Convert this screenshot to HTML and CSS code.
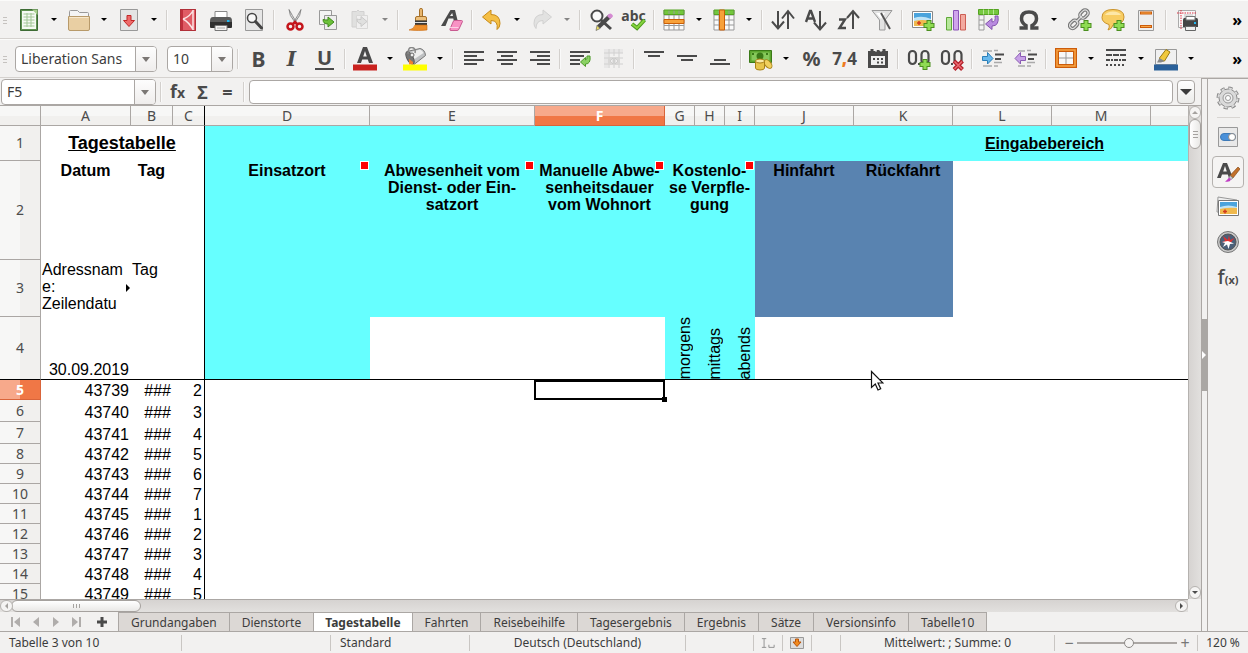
FILE: index.html
```html
<!DOCTYPE html>
<html lang="de">
<head>
  <meta charset="UTF-8" />
  <meta name="viewport" content="width=device-width, initial-scale=1.0"/>
  <title>Tagestabelle</title>
  <link rel="stylesheet" href="styles.css">
</head>
<body>
  <!-- Standard toolbar -->
  <div class="toolbar">
    <span class="grip"></span>
    <button class="tool split" title="Neu"><svg class="icon" viewBox="0 0 24 24"><path d="M3.500 1.500h17v21h-17z" fill="#5f9150" stroke="#3d6b34"/><path d="M5 3h14v18H5z" fill="#f6faf3"/><path d="M15 1.500h5.500V7z" fill="#a9d08f"/><path d="M6.500 6h11M6.500 9h11M6.500 12h11M6.500 15h11M6.500 18h11M10 5v14M14 5v14" stroke="#a3c796" fill="none"/></svg><i class="caret"></i></button>
    <button class="tool split" title="Öffnen"><svg class="icon" viewBox="0 0 24 24"><path d="M2.500 20V3.500q0-1 1-1h7l2 2h8q1 0 1 1V20z" fill="#f4f4f4" stroke="#999"/><path d="M1.500 8.500h21V21q0 1.500-1.500 1.500H3Q1.500 22.500 1.500 21z" fill="#e9cfa3" stroke="#b89a6a"/><path d="M2.500 9.500h19" stroke="#f7e8cd"/></svg><i class="caret"></i></button>
    <button class="tool split" title="Speichern"><svg class="icon" viewBox="0 0 24 24"><path d="M3.500 1.500h17v21h-17z" fill="#e4e4e4" stroke="#999"/><path d="M10 7.500h4v5h3.500L12 18.500 6.500 12.500H10z" fill="#ee6a6a" stroke="#c02626"/></svg><i class="caret"></i></button>
    <span class="sep"></span>
    <button class="tool" title="Als PDF exportieren"><svg class="icon" viewBox="0 0 24 24"><path d="M4 1h16v22H4z" fill="#e05c65"/><path d="M4 1h3v22H4z" fill="#c02f3c"/><path d="M17 1v22M7 11Q14 9 18 1M7 11q6 3 11 12" stroke="#fbe3e4" stroke-width="1.500" fill="none"/><path d="M4.500 1.500h15v21h-15z" fill="none" stroke="#b03038"/></svg></button>
    <button class="tool" title="Drucken"><svg class="icon" viewBox="0 0 24 24"><path d="M6 3.500h12V10H6z" fill="#fff" stroke="#888"/><path d="M4 9h16q3 0 3 4v5H1v-5q0-4 3-4z" fill="#5a5a5a"/><path d="M1 14h22v5q0 1-1 1H2q-1 0-1-1z" fill="#2f2f2f"/><path d="M6 17.500h12v5H6z" fill="#f3f3f3" stroke="#777"/><path d="M8 20h8" stroke="#aaa"/><path d="M18 12h2.500v2H18z" fill="#22b7f0"/></svg></button>
    <button class="tool" title="Druckvorschau"><svg class="icon" viewBox="0 0 24 24"><path d="M3.500 1.500h17v21h-17z" fill="#e6e6e6" stroke="#999"/><circle cx="10" cy="10" r="4.500" fill="#f8f8f8" stroke="#444" stroke-width="1.500"/><path d="M13.500 13.500l6 6.500" stroke="#444" stroke-width="3" stroke-linecap="round"/></svg></button>
    <span class="sep"></span>
    <button class="tool" title="Ausschneiden"><svg class="icon" viewBox="0 0 24 24"><path d="M6 1.500q0 6 5.500 12l2 1Q9 7 6 1.500zM18 1.500q0 6-5.500 12l-2 1Q15 7 18 1.500z" fill="#ddd" stroke="#777" stroke-width=".8"/><g fill="none" stroke="#c4161c" stroke-width="2.500"><circle cx="7.500" cy="18.500" r="3"/><circle cx="16.500" cy="18.500" r="3"/><path d="M10 16l2-2 2 2"/></g></svg></button>
    <button class="tool" title="Kopieren"><svg class="icon" viewBox="0 0 24 24"><path d="M3.500 2.500h12v14h-12z" fill="#f4f4f4" stroke="#999"/><path d="M8.500 7.500h12v14h-12z" fill="#eee" stroke="#999"/><path d="M7 11.500q0 4.500 5 4.500v3l6-5-6-5v3q-3 0-5-.5z" fill="#6cc13a" stroke="#3f8a1b"/></svg></button>
    <button class="tool split" title="Einfügen"><svg class="icon faded" viewBox="0 0 24 24"><path d="M4 3.500h4.500q1.500-3 3 0H16V19H4z" fill="#ccc" stroke="#aaa"/><path d="M8.500 7.500h11v13h-11z" fill="#eee" stroke="#bbb"/><path d="M9 11q0 4.500 4 4.500v3l6-5-6-5v3q-3 0-4-.5z" fill="#ccc" stroke="#999"/></svg><i class="caret faded"></i></button>
    <span class="sep"></span>
    <button class="tool" title="Format übertragen"><svg class="icon" viewBox="0 0 24 24"><path d="M12.500 1.500q0-1 1.500-1t1.500 1V9h-3z" fill="#e8b66e" stroke="#a5702a"/><path d="M8.500 10q0-1.500 1.500-1.500h8q1.500 0 1.500 1.500v3h-11z" fill="#edc07c" stroke="#a5702a"/><path d="M8 12.500h12V17H8z" fill="#3a3a3a"/><path d="M8 14.500h12" stroke="#ddd"/><path d="M8 17h12v5q-8 1-18 0 5-1 6-5z" fill="#ee8f2c" stroke="#c86a10" stroke-width=".6"/></svg></button>
    <button class="tool" title="Direkte Formatierung löschen"><svg class="icon" viewBox="0 0 24 24"><path d="M1 18L10.500 2H15l3 12h-4l-.7-3.500H8.500L5.500 18zM10 8h3l-.8-3z" fill="#4a4a4a" fill-rule="evenodd"/><path d="M14.500 12.500h7q1 0 1 1L19 21q-.5 1.500-2 1.500h-6q-1.500 0-1-1.500l3-7q.5-1.500 1.500-1.500z" fill="#f892c4" stroke="#c85a90"/><path d="M10 19.500h8.500" stroke="#fcd0e5"/></svg></button>
    <span class="sep"></span>
    <button class="tool split" title="Rückgängig"><svg class="icon" viewBox="0 0 24 24"><path d="M2.500 9L11 2v4.500q9 0 9 9 0 4-3 6 1.500-9-6-9V16z" fill="#f5bf45" stroke="#c78a18"/></svg><i class="caret"></i></button>
    <button class="tool split" title="Wiederholen"><svg class="icon faded" viewBox="0 0 24 24"><path d="M21.500 9L13 2v4.500q-9 0-9 9 0 3 2 5 0-8 7-8V16z" fill="#d0d0d0" stroke="#aaa"/></svg><i class="caret faded"></i></button>
    <span class="sep"></span>
    <button class="tool" title="Suchen und Ersetzen"><svg class="icon" viewBox="0 0 24 24"><circle cx="8" cy="8" r="5.500" fill="#fafafa" stroke="#4a4a4a" stroke-width="2"/><path d="M12 12l10 9" stroke="#4a4a4a" stroke-width="3"/><path d="M19.500 6.500l3 3L11 20.500 8 17.500z" fill="#4a4a4a"/><path d="M18 8l2-2q1.500-1 3 .5t.5 2.500L21 11z" fill="#d58ad2"/><path d="M8 17.500l3 3-4 2z" fill="#f0e060" stroke="#555" stroke-width=".6"/></svg></button>
    <button class="tool" title="Rechtschreibung"><span class="glyph abc">abc</span><svg class="icon overlay" viewBox="0 0 24 24"><path d="M10 16l5 4 7.500-8" fill="none" stroke="#4b9a1c" stroke-width="4"/><path d="M10 16l5 4 7.500-8" fill="none" stroke="#86d33f" stroke-width="2"/></svg></button>
    <span class="sep"></span>
    <button class="tool split" title="Zeile"><svg class="icon" viewBox="0 0 24 24"><path d="M2 2h20v5H2z" fill="#73c83c"/><path d="M2 7h20v15H2z" fill="#fafafa"/><path d="M2 7h20M2 17.500h20M2 22h20M2 2v20M7 2v20M12 2v20M17 2v20M22 2v20" stroke="#999" fill="none"/><path d="M2 11.500h20v4H2z" fill="#f7a13a" stroke="#c95f08"/><path d="M2 2h20v4.500H2z" fill="none" stroke="#55a322"/></svg><i class="caret"></i></button>
    <button class="tool split" title="Spalte"><svg class="icon" viewBox="0 0 24 24"><path d="M2 2h20v5H2z" fill="#73c83c"/><path d="M2 7h20v15H2z" fill="#fafafa"/><path d="M2 7h20M2 12h20M2 17h20M2 22h20M2 2v20M7 2v20M17 2v20M22 2v20" stroke="#999" fill="none"/><path d="M2 2h20v4.500H2z" fill="none" stroke="#55a322"/><path d="M7.500 2h5v20h-5z" fill="#f7a13a" stroke="#c95f08"/></svg><i class="caret"></i></button>
    <span class="sep"></span>
    <button class="tool" title="Sortieren"><svg class="icon" viewBox="0 0 24 24"><path d="M7 3v17M1 13.500l6 7 6-7M17 21V4M11 10.500L17 3l6 7.500" fill="none" stroke="#4a4a4a" stroke-width="2"/></svg></button>
    <button class="tool" title="Aufsteigend sortieren"><svg class="icon" viewBox="0 0 24 24"><path d="M2 14L6 3h1l4 11M3.500 10.500h6" fill="none" stroke="#4a4a4a" stroke-width="2.400"/><path d="M16 3v18M10 14.500l6 7 6-7" fill="none" stroke="#4a4a4a" stroke-width="2"/></svg></button>
    <button class="tool" title="Absteigend sortieren"><svg class="icon" viewBox="0 0 24 24"><path d="M2 11.500h6L2.500 20H9" fill="none" stroke="#4a4a4a" stroke-width="2.400"/><path d="M16 21V3M10 10l6-7 6 7" fill="none" stroke="#4a4a4a" stroke-width="2"/></svg></button>
    <button class="tool" title="AutoFilter"><svg class="icon" viewBox="0 0 24 24"><path d="M2 2.500h20L15 12v10H9.500V12z" fill="#e2e2e2" stroke="#999"/><path d="M6 5h9l-4 6z" fill="#fff"/><path d="M11 5l9 16" stroke="#555" stroke-width="2"/></svg></button>
    <span class="sep"></span>
    <button class="tool" title="Bild einfügen"><svg class="icon" viewBox="0 0 24 24"><path d="M1.500 3.500h20v16h-20z" fill="#fff" stroke="#888"/><path d="M3 5h17v13H3z" fill="#4aa3dc"/><path d="M3 10q8-3 17 1v7H3z" fill="#bfe3f5"/><path d="M3 13q8-2 17 0v5H3z" fill="#f0b94d"/><path d="M6 15h4M8 13v4" stroke="#d23a1c" stroke-width="1.500"/><path class="plus-out" d="M18 12v11M12.500 17.500h11"/><path class="plus-in" d="M18 13v9M13.500 17.500h9"/></svg></button>
    <button class="tool" title="Diagramm einfügen"><svg class="icon" viewBox="0 0 24 24"><path d="M2.500 9.500h5V22h-5z" fill="#b6e79a" stroke="#5fa838"/><path d="M9.500 2.500h5V22h-5z" fill="#cfa5ec" stroke="#8b54b8"/><path d="M16.500 6.500h5V22h-5z" fill="#f3aaa0" stroke="#cc5f55"/></svg></button>
    <button class="tool" title="Pivot-Tabelle einfügen"><svg class="icon" viewBox="0 0 24 24"><path d="M2 7h5v15H2z" fill="#f4f4f4" stroke="#999"/><path d="M2 12h5M2 17h5" stroke="#999"/><path d="M1.500 1.500h20v5h-20z" fill="#76c840" stroke="#55a322"/><path d="M6.500 1.500v5M11.500 1.500v5M16.500 1.500v5" stroke="#b7e595"/><path d="M21 8q1.500 10-6 10v3.500L8.500 16 15 10.500V14q4 0 3-6z" fill="#b98be0" stroke="#8456ad"/></svg></button>
    <span class="sep"></span>
    <button class="tool split" title="Sonderzeichen"><svg class="icon" viewBox="0 0 24 24"><path d="M2.500 20H9v-2.500Q4.500 15 4.500 10.500 4.500 4 12 4t7.500 6.500q0 4.500-4.500 7V20h6.500" fill="none" stroke="#4a4a4a" stroke-width="3.500"/></svg><i class="caret"></i></button>
    <button class="tool" title="Hyperlink"><svg class="icon" viewBox="0 0 24 24"><g fill="none" stroke="#777" stroke-width="3.500"><rect x="13" y="1.500" width="6" height="9" rx="3" transform="rotate(45 16 6)"/><rect x="3" y="12" width="6" height="9" rx="3" transform="rotate(45 6 16)"/><path d="M8 14l6-6"/></g><g fill="none" stroke="#ddd" stroke-width="1.200"><rect x="13" y="1.500" width="6" height="9" rx="3" transform="rotate(45 16 6)"/><rect x="3" y="12" width="6" height="9" rx="3" transform="rotate(45 6 16)"/><path d="M8 14l6-6"/></g><path class="plus-out" d="M18 12v11M12.500 17.500h11"/><path class="plus-in" d="M18 13v9M13.500 17.500h9"/></svg></button>
    <button class="tool" title="Kommentar"><svg class="icon" viewBox="0 0 24 24"><path d="M12 1.500q11 0 11 7.500T12 17q-1 4-5 5 2-3 1-5.500-7-2-7-7Q1 1.500 12 1.500z" fill="#f8cd63" stroke="#c9922a"/><path d="M4 7q2-3.500 8-3.500T20 7z" fill="#fde7a8"/><path class="plus-out" d="M18 12v11M12.500 17.500h11"/><path class="plus-in" d="M18 13v9M13.500 17.500h9"/></svg></button>
    <button class="tool" title="Kopf- und Fußzeilen"><svg class="icon" viewBox="0 0 24 24"><path d="M4.500 2.500h15v20h-15z" fill="#eee" stroke="#999"/><path d="M6 5h12M6 18.500h12" stroke="#cc5c0a" stroke-width="3"/><path d="M7 5h10M7 18.500h10" stroke="#f9a646"/></svg></button>
    <span class="sep"></span>
    <button class="tool" title="Druckbereiche"><svg class="icon" viewBox="0 0 24 24"><path d="M3.500 2.500h17v17h-17z" fill="#f8f8f8" stroke="#aaa"/><path d="M2 5h19M6 2v20" stroke="#dd3344" stroke-dasharray="1.500 1" fill="none"/><path d="M9 6h9v6H9z" fill="#ddd"/><path d="M9.500 10h12q1.500 0 1.500 2v7H8v-7q0-2 1.500-2z" fill="#444"/><path d="M11 8.500h9V12h-9z" fill="#fff" stroke="#777"/><path d="M10.500 18.500h10v4h-10z" fill="#eee" stroke="#666"/><path d="M19 14h2v2h-2z" fill="#22b7f0"/></svg></button>
    <button class="more" title="Mehr">»</button>
  </div>

  <!-- Formatting toolbar -->
  <div class="toolbar">
    <span class="grip"></span>
    <span class="combo font-name"><select aria-label="Schriftname"><option>Liberation Sans</option></select></span>
    <span class="combo font-size"><select aria-label="Schriftgröße"><option>10</option></select></span>
    <span class="sep"></span>
    <button class="tool" title="Fett"><span class="glyph bold">B</span></button>
    <button class="tool" title="Kursiv"><span class="glyph italic">I</span></button>
    <button class="tool" title="Unterstrichen"><span class="glyph underline">U</span></button>
    <span class="sep"></span>
    <button class="tool split" title="Schriftfarbe"><svg class="icon" viewBox="0 0 24 24"><path d="M4 16L10 0h4l6 16h-4l-1.200-3.500H9.200L8 16zM10.200 9.500h3.600L12 4z" fill="#4a4a4a" fill-rule="evenodd"/><path d="M0 17.500h24v6H0z" fill="#c9211e"/></svg><i class="caret"></i></button>
    <button class="tool split" title="Hintergrundfarbe"><svg class="icon" viewBox="0 0 24 24"><path d="M4 4.500L17 1.500q5 1 5.500 7L11 17.500z" fill="#bfc1c3" stroke="#777"/><path d="M8 5l9-2.500q2.500 1 3.500 3.500l-9 6z" fill="#eee"/><ellipse cx="7" cy="11" rx="3" ry="7" fill="#777" stroke="#555" transform="rotate(-28 7 11)"/><circle cx="9" cy="8" r="2" fill="#eee" stroke="#666"/><path d="M5 7Q5 0 9 .5T12 6" fill="none" stroke="#888" stroke-width="1.500"/><path d="M6 12l4 3v2.500H6z" fill="#f08030"/><path d="M0 17.500h24v6H0z" fill="#ffff00"/></svg><i class="caret"></i></button>
    <span class="sep"></span>
    <button class="tool" title="Linksbündig"><svg class="icon" viewBox="0 0 24 24"><path d="M2 5h20M2 9h13M2 13h20M2 17h13" stroke="#4a4a4a" stroke-width="2"/></svg></button>
    <button class="tool" title="Zentriert"><svg class="icon" viewBox="0 0 24 24"><path d="M2 5h20M6 9h12M2 13h20M6 17h12" stroke="#4a4a4a" stroke-width="2"/></svg></button>
    <button class="tool" title="Rechtsbündig"><svg class="icon" viewBox="0 0 24 24"><path d="M2 5h20M9 9h13M2 13h20M9 17h13" stroke="#4a4a4a" stroke-width="2"/></svg></button>
    <span class="sep"></span>
    <button class="tool" title="Zeilenumbruch"><svg class="icon" viewBox="0 0 24 24"><path d="M1 5h20M1 9h14M1 13h10M1 17h10" stroke="#4a4a4a" stroke-width="2"/><path d="M18 9h3q1 8-4.500 8v2.500L11.500 15l5-4.500V13q2 0 1.500-4z" fill="#8bd264" stroke="#4f9a2b"/></svg></button>
    <button class="tool" title="Zellen verbinden"><svg class="icon faded" viewBox="0 0 24 24"><path d="M2 2h19v4H2zM2 2h4v19H2z" fill="#ddd"/><path d="M2 6h19M2 11h19M2 17h19M7 2v19M12 2v7M12 18v3M17 2v19" stroke="#aaa" fill="none"/><path d="M6 10h12v8H6z" fill="#bbb"/><path d="M11 11v6l-3-3zM13 11v6l3-3z" fill="#eee" stroke="#888" stroke-width=".6"/></svg></button>
    <span class="sep"></span>
    <button class="tool" title="Oben ausrichten"><svg class="icon" viewBox="0 0 24 24"><path d="M1 5h20M5 9h12" stroke="#4a4a4a" stroke-width="2"/></svg></button>
    <button class="tool" title="Vertikal zentrieren"><svg class="icon" viewBox="0 0 24 24"><path d="M1 9h20M5 13h12" stroke="#4a4a4a" stroke-width="2"/></svg></button>
    <button class="tool" title="Unten ausrichten"><svg class="icon" viewBox="0 0 24 24"><path d="M5 13h12M1 17h20" stroke="#4a4a4a" stroke-width="2"/></svg></button>
    <span class="sep"></span>
    <button class="tool split" title="Währung"><svg class="icon" viewBox="0 0 24 24"><path d="M.5 3.500h22v12H.5z" fill="#5ba52e" stroke="#3b7a18"/><path d="M2.500 5.500h18v8h-18z" fill="#86c95b"/><circle cx="11" cy="9" r="3.500" fill="#3b7a18"/><path d="M3 7h2M17 7h2" stroke="#3b7a18" stroke-width="2"/><ellipse cx="19" cy="17" rx="3" ry="5" fill="#f0d05e" stroke="#a98216" transform="rotate(-40 19 17)"/><path d="M6.500 14v7q0 2 4.500 2t4.500-2v-7z" fill="#e8c54c" stroke="#a98216"/><ellipse cx="11" cy="14" rx="4.500" ry="2" fill="#faeaa6" stroke="#a98216"/></svg><i class="caret"></i></button>
    <button class="tool" title="Prozent"><span class="glyph percent">%</span></button>
    <button class="tool" title="Zahl"><span class="glyph number">7<b>,</b>4</span></button>
    <button class="tool" title="Datum"><svg class="icon" viewBox="0 0 24 24"><path d="M3.500 5.500h17v14h-17z" fill="#efefef" stroke="#4a4a4a" stroke-width="3"/><path d="M2 4h20v5H2z" fill="#4a4a4a"/><path d="M6 2v4M18 2v4M12 3v3" stroke="#4a4a4a" stroke-width="3"/><path d="M9 4h2M14 4h2" stroke="#eee"/><path d="M7 12h2M11 12h2M15 12h2M11 15.500h2M15 15.500h2" stroke="#4a4a4a" stroke-width="2"/></svg></button>
    <span class="sep"></span>
    <button class="tool" title="Dezimalstelle hinzufügen"><svg class="icon" viewBox="0 0 24 24"><rect x="2" y="4" width="7" height="13" rx="3.500" fill="none" stroke="#4a4a4a" stroke-width="2.200"/><rect x="14.500" y="4" width="7" height="13" rx="3.500" fill="none" stroke="#4a4a4a" stroke-width="2.200"/><path d="M11 17h2" stroke="#4a4a4a" stroke-width="2"/><path class="plus-out" d="M18 12v11M12.500 17.500h11"/><path class="plus-in" d="M18 13v9M13.500 17.500h9"/></svg></button>
    <button class="tool" title="Dezimalstelle löschen"><svg class="icon" viewBox="0 0 24 24"><rect x="2" y="4" width="7" height="13" rx="3.500" fill="none" stroke="#4a4a4a" stroke-width="2.200"/><rect x="14.500" y="4" width="7" height="13" rx="3.500" fill="none" stroke="#4a4a4a" stroke-width="2.200"/><path d="M11 17h2" stroke="#4a4a4a" stroke-width="2"/><path d="M14 14l8.500 8.500M22.500 14L14 22.500" stroke="#b3202a" stroke-width="4"/><path d="M14.500 14.500l7.500 7.500M22 14.500L14.500 22" stroke="#ee6a72" stroke-width="1.500"/></svg></button>
    <span class="sep"></span>
    <button class="tool" title="Einzug erhöhen"><svg class="icon" viewBox="0 0 24 24"><path d="M2 4h9M13 3.500h4M2 19h9M13 19h4M13 15.500h8" stroke="#aaa" stroke-width="1.500"/><path d="M14 7.500h9M14 12h6" stroke="#4a4a4a" stroke-width="2"/><path d="M1.500 9.500h5v-4L12 11.500 6.500 17v-3.500h-5z" fill="#68b8ec" stroke="#2b7fb8"/></svg></button>
    <button class="tool" title="Einzug verringern"><svg class="icon" viewBox="0 0 24 24"><path d="M4 4h7M13 3.500h4M4 19h7M13 19h4M13 15.500h8" stroke="#aaa" stroke-width="1.500"/><path d="M14 7.500h9M14 12h6" stroke="#4a4a4a" stroke-width="2"/><path d="M11.500 9.500h-5v-4L1 11.500 6.500 17v-3.500h5z" fill="#c7a0e6" stroke="#8b5cb5"/></svg></button>
    <span class="sep"></span>
    <button class="tool split" title="Umrandung"><svg class="icon" viewBox="0 0 24 24"><path d="M3 3h18v16H3z" fill="#f8f8f8" stroke="#cc5c0a" stroke-width="4"/><path d="M3 3h18v16H3z" fill="none" stroke="#f9a646" stroke-width="1.500"/><path d="M12 5v12M5 11h14" stroke="#999"/></svg><i class="caret"></i></button>
    <button class="tool split" title="Umrandungsstil"><svg class="icon" viewBox="0 0 24 24"><path d="M2 3h20" stroke="#4a4a4a" stroke-width="2"/><path d="M2 8h20" stroke="#4a4a4a" stroke-width="2" stroke-dasharray="6 1"/><path d="M2 13h20" stroke="#4a4a4a" stroke-width="2" stroke-dasharray="4 1 2 1"/><path d="M2 18h20" stroke="#4a4a4a" stroke-width="2" stroke-dasharray="2 2"/></svg><i class="caret"></i></button>
    <button class="tool split" title="Umrandungsfarbe"><svg class="icon" viewBox="0 0 24 24"><path d="M1.500 2.500h21v15h-21z" fill="#f0f0f0" stroke="#999"/><path d="M12 2.500l4 2.500-5.500 9H5.500v-3z" fill="#f0c83c" stroke="#9a7a10"/><path d="M5.500 11L3 15.500h4l3.500-1.500z" fill="#888"/><path d="M0 17.500h24v6H0z" fill="#2a6099"/></svg><i class="caret"></i></button>
    <button class="more" title="Mehr">»</button>
  </div>

  <div class="workspace">
    <div class="main">
      <div class="formula-bar">
        <div class="combo name-box">
          <input type="text" value="F5" aria-label="Namensfeld" />
          <button title="Namen auswählen"></button>
        </div>
        <span class="sep"></span>
        <button class="fx" title="Funktions-Assistent">f<small>x</small></button>
        <button class="fx" title="Summe">Σ</button>
        <button class="fx" title="Formel">=</button>
        <span class="sep"></span>
        <input class="formula-input" type="text" aria-label="Eingabezeile" />
        <button class="expand" title="Eingabezeile erweitern"></button>
      </div>

      <div class="sheet-area">
        <div class="sheet">
          <table>
            <colgroup>
              <col class="w-head"><col class="w-a"><col class="w-b"><col class="w-c">
              <col class="w-wide"><col class="w-wide"><col class="w-f">
              <col class="w-meal"><col class="w-meal"><col class="w-meal">
              <col class="w-std"><col class="w-std"><col class="w-std"><col class="w-std"><col class="w-std">
              <col class="w-o"><col>
            </colgroup>
            <thead>
              <tr>
                <th></th><th>A</th><th>B</th><th class="freeze">C</th><th>D</th><th>E</th><th class="active">F</th><th>G</th><th>H</th><th>I</th><th>J</th><th>K</th><th>L</th><th>M</th><th></th><th></th><th></th>
              </tr>
            </thead>
            <tbody>
              <tr class="row-1">
                <th>1</th>
                <td class="title freeze" colspan="3">Tagestabelle</td>
                <td class="cyan" colspan="6"></td>
                <td class="cyan section" colspan="6">Eingabebereich</td>
                <td class="cyan"></td>
              </tr>
              <tr class="row-2">
                <th>2</th>
                <td>Datum</td><td>Tag</td><td class="freeze"></td>
                <td class="cyan noted">Einsatzort</td>
                <td class="cyan noted">Abwesenheit vom<br>Dienst- oder Ein-<br>satzort</td>
                <td class="cyan noted">Manuelle Abwe-<br>senheitsdauer<br>vom Wohnort</td>
                <td class="cyan noted" colspan="3">Kostenlo-<br>se Verpfle-<br>gung</td>
                <td class="blue">Hinfahrt</td>
                <td class="blue">Rückfahrt</td>
                <td colspan="5"></td>
              </tr>
              <tr class="row-3">
                <th>3</th>
                <td class="clipped">Adressnam<br>e:<br>Zeilendatu</td><td>Tag</td><td class="freeze"></td>
                <td class="cyan" colspan="6"></td>
                <td class="blue" colspan="2"></td>
                <td colspan="5"></td>
              </tr>
              <tr class="row-4">
                <th>4</th>
                <td>30.09.2019</td><td></td><td class="freeze"></td>
                <td class="cyan"></td><td colspan="2"></td>
                <td class="cyan"><span class="vertical">morgens</span></td>
                <td class="cyan"><span class="vertical">mittags</span></td>
                <td class="cyan"><span class="vertical">abends</span></td>
                <td colspan="7"></td>
              </tr>
              <tr><th class="active">5</th><td>43739</td><td>###</td><td class="freeze">2</td><td colspan="2"></td><td class="selected"></td><td colspan="10"></td></tr>
              <tr class="tall"><th>6</th><td>43740</td><td>###</td><td class="freeze">3</td><td colspan="13"></td></tr>
              <tr class="tall"><th>7</th><td>43741</td><td>###</td><td class="freeze">4</td><td colspan="13"></td></tr>
              <tr><th>8</th><td>43742</td><td>###</td><td class="freeze">5</td><td colspan="13"></td></tr>
              <tr><th>9</th><td>43743</td><td>###</td><td class="freeze">6</td><td colspan="13"></td></tr>
              <tr><th>10</th><td>43744</td><td>###</td><td class="freeze">7</td><td colspan="13"></td></tr>
              <tr><th>11</th><td>43745</td><td>###</td><td class="freeze">1</td><td colspan="13"></td></tr>
              <tr><th>12</th><td>43746</td><td>###</td><td class="freeze">2</td><td colspan="13"></td></tr>
              <tr><th>13</th><td>43747</td><td>###</td><td class="freeze">3</td><td colspan="13"></td></tr>
              <tr><th>14</th><td>43748</td><td>###</td><td class="freeze">4</td><td colspan="13"></td></tr>
              <tr><th>15</th><td>43749</td><td>###</td><td class="freeze">5</td><td colspan="13"></td></tr>
            </tbody>
          </table>
          <svg class="pointer" viewBox="0 0 14 22"><path d="M1.500 1.500v16l3.800-3.500 2.700 6 2.700-1.200L8 13h5z" fill="#fff" stroke="#111" stroke-width="1.200"/></svg>
        </div>
        <div class="scroll vertical-scroll">
          <button class="up" title="Nach oben"></button>
          <span class="thumb"></span>
          <span class="track"></span>
          <button class="down" title="Nach unten"></button>
        </div>
      </div>

      <div class="scroll horizontal-scroll">
        <button class="left" title="Nach links"></button>
        <span class="thumb"></span>
        <span class="track"></span>
        <button class="right" title="Nach rechts"></button>
      </div>

      <div class="tab-bar">
        <button class="nav" title="Erste Tabelle"><svg viewBox="0 0 10 12"><path d="M1 1v10" stroke="#b0adab" stroke-width="2"/><path d="M9 1v10L3 6z" fill="#b0adab"/></svg></button>
        <button class="nav" title="Vorherige Tabelle"><svg viewBox="0 0 10 12"><path d="M8 1v10L2 6z" fill="#b0adab"/></svg></button>
        <button class="nav" title="Nächste Tabelle"><svg viewBox="0 0 10 12"><path d="M2 1v10l6-5z" fill="#b0adab"/></svg></button>
        <button class="nav" title="Letzte Tabelle"><svg viewBox="0 0 10 12"><path d="M9 1v10" stroke="#b0adab" stroke-width="2"/><path d="M1 1v10l6-5z" fill="#b0adab"/></svg></button>
        <button class="add" title="Tabelle hinzufügen"><svg viewBox="0 0 12 12"><path d="M6 1v10M1 6h10" stroke="#4a4a4a" stroke-width="3"/></svg></button>
        <div class="tabs">
          <button>Grundangaben</button>
          <button>Dienstorte</button>
          <button class="current">Tagestabelle</button>
          <button>Fahrten</button>
          <button>Reisebeihilfe</button>
          <button>Tagesergebnis</button>
          <button>Ergebnis</button>
          <button>Sätze</button>
          <button>Versionsinfo</button>
          <button>Tabelle10</button>
        </div>
      </div>
    </div>

    <div class="splitter"><button title="Seitenleiste ausblenden"></button></div>

    <div class="sidebar">
      <button title="Einstellungen"><svg class="icon" viewBox="0 0 24 24"><circle cx="12" cy="12" r="9.500" fill="none" stroke="#888" stroke-width="4" stroke-dasharray="4 3.460"/><circle cx="12" cy="12" r="9" fill="#dadada" stroke="#888"/><circle cx="12" cy="12" r="9.500" fill="none" stroke="#dadada" stroke-width="2" stroke-dasharray="3 4.460" stroke-dashoffset="-.5"/><circle cx="12" cy="12" r="5" fill="#eee" stroke="#999"/><circle cx="12" cy="12" r="2.500" fill="#fff" stroke="#999"/></svg></button>
      <hr>
      <button title="Eigenschaften"><svg class="icon" viewBox="0 0 24 24"><path d="M2.500 2.500h19v19h-19z" fill="#e9e9e9" stroke="#999"/><rect x="4.500" y="8.500" width="15" height="7" rx="3.500" fill="#4a90d9" stroke="#3d7ab8"/><circle cx="16" cy="12" r="3.500" fill="#fff" stroke="#888"/></svg></button>
      <button class="pressed" title="Formatvorlagen"><svg class="icon" viewBox="0 0 24 24"><path d="M1 18L7 3h4l6 15h-4l-1.200-3.500H6L4.800 18zM7.200 11.500h3.600L9 6z" fill="#4a4a4a" fill-rule="evenodd"/><path d="M22 7l2 2-7 9-3-2.500z" fill="#c2702a" stroke="#7a3f10" stroke-width=".6"/><path d="M14 15.500l3 2.500-2 1.500-2-2z" fill="#ccc" stroke="#777" stroke-width=".6"/><path d="M13 17.500l2 2q-1 3-6 2 2-1 4-4z" fill="#c03cc4"/></svg></button>
      <button title="Galerie"><svg class="icon" viewBox="0 0 24 24"><path d="M2 2l19 3-1 14-19-2z" fill="#eee" stroke="#999"/><path d="M2.500 5.500h20v15h-20z" fill="#fff" stroke="#777"/><path d="M4 7h17v12H4z" fill="#4aa3dc"/><path d="M4 12q8-3 17 0v7H4z" fill="#bfe3f5"/><path d="M4 14q8-2 17-1v6H4z" fill="#f0b94d"/><path d="M7 16.500h4M9 14.500v4" stroke="#d23a1c" stroke-width="1.500"/></svg></button>
      <button title="Navigator"><svg class="icon" viewBox="0 0 24 24"><circle cx="12" cy="12" r="10.500" fill="#c8c8c8" stroke="#777"/><circle cx="12" cy="12" r="8" fill="#4b5f78" stroke="#555"/><path d="M7 6l5 4 1-5 1 5 4.500-2-4.500 5.500L6 12l3-1z" fill="#e03030"/><path d="M6 12l6-1 6 2.500-4 .5-1.500 5-1.500-4.500L7 17l2-4z" fill="#fff"/></svg></button>
      <button class="functions" title="Funktionen">f<small>(x)</small></button>
    </div>
  </div>

  <div class="status-bar">
    <span>Tabelle 3 von 10</span>
    <span></span>
    <span>Standard</span>
    <span class="center">Deutsch (Deutschland)</span>
    <span></span>
    <span class="center"><svg viewBox="0 0 16 12"><path d="M1 1h5M3.500 1v10M1 11h5M9 8v3h6V8" fill="none" stroke="#888"/></svg></span>
    <span class="center"><svg viewBox="0 0 14 12"><path d="M.5.500h13v11H.5z" fill="#ddd" stroke="#999"/><path d="M5.500 2h3v3H11L7 9.500 3 5h2.500z" fill="#f28a1e" stroke="#b8540a"/></svg></span>
    <span></span>
    <span class="center">Mittelwert: ; Summe: 0</span>
    <span class="zoom"><button title="Verkleinern">−</button><input type="range" min="0" max="100" value="52" aria-label="Maßstab" /><button title="Vergrößern">+</button></span>
    <span class="center">120 %</span>
  </div>
</body>
</html>
```
FILE: styles.css
```css
* {
  box-sizing: border-box;
}

body {
  margin: 0;
  height: 100vh;
  display: flex;
  flex-direction: column;
  overflow: hidden;
  background-color: #f2f1f0;
  color: #3c3c3c;
  font-family: 'Noto Sans', sans-serif;
  font-size: 12px;
}

button,
input,
select {
  margin: 0;
  padding: 0;
  border: none;
  background: none;
  color: inherit;
  font: inherit;
}

/* Toolbars */
.toolbar {
  display: flex;
  align-items: center;
  height: 39px;
  flex: none;
  border-top: 1px solid #fbfbfa;
  border-bottom: 1px solid #d5d2cf;
}

.grip {
  width: 4px;
  height: 8px;
  margin: 2px 6px 0 3px;
  background: repeating-linear-gradient(#c5c2bf 0 1px, transparent 1px 3px);
}

.tool {
  position: relative;
  display: flex;
  align-items: center;
  justify-content: center;
  width: 33px;
  height: 33px;
  flex: none;
}

.tool.split {
  width: 50px;
  justify-content: flex-start;
  gap: 10px;
  padding-left: 4px;
}

.icon {
  display: block;
  width: 24px;
  height: 24px;
  flex: none;
}

.overlay {
  position: absolute;
  left: 5px;
  top: 5px;
}

.faded {
  opacity: 0.45;
}

.plus-out {
  stroke: #4b8f1f;
  stroke-width: 5;
}

.plus-in {
  stroke: #8fdc52;
  stroke-width: 3;
}

.caret {
  border: 3px solid transparent;
  border-top-color: #000;
  border-bottom-width: 0;
}

.sep {
  width: 8px;
  height: 20px;
  flex: none;
  background: linear-gradient(90deg, transparent 3px, #d3d0cd 3px 4px, #fafafa 4px 5px, transparent 5px);
}

.more {
  margin-left: auto;
  margin-right: 6px;
  font-size: 16px;
  line-height: 20px;
  font-weight: bold;
  color: #000;
}

.glyph {
  color: #4a4a4a;
  font-weight: bold;
  font-size: 21px;
  line-height: 24px;
}

.glyph.abc {
  font-size: 14px;
  line-height: 14px;
  margin-bottom: 8px;
}

.glyph.italic {
  font-family: 'DejaVu Serif', serif;
  font-style: italic;
  font-size: 20px;
}

.glyph.underline {
  font-size: 20px;
  line-height: 20px;
  border-bottom: 2px solid #4a4a4a;
  padding: 0 2px;
}

.glyph.percent {
  font-size: 20px;
}

.glyph.number {
  font-size: 17px;
}

.glyph.number b {
  color: #ee7b22;
}

/* Combo boxes */
.combo {
  position: relative;
  display: flex;
  height: 26px;
  border: 1px solid #aba7a4;
  border-radius: 4px;
  background-color: #fff;
  overflow: hidden;
  font-size: 14px;
}

.combo select {
  appearance: none;
  width: 100%;
  padding-left: 5px;
  background: linear-gradient(#aba7a4, #aba7a4) right 20px top 0 / 1px 100% no-repeat,
    linear-gradient(#fdfdfd, #efedec) right / 20px 100% no-repeat;
}

.combo::after {
  content: '';
  position: absolute;
  right: 6px;
  top: 10px;
  border: 4px solid transparent;
  border-top: 5px solid #7b7774;
  border-bottom-width: 0;
  pointer-events: none;
}

.font-name {
  width: 142px;
  margin: 0 10px 0 2px;
}

.font-size {
  width: 66px;
  margin-right: 1px;
}

/* Workspace */
.workspace {
  display: flex;
  flex: 1;
  min-height: 0;
}

.main {
  display: flex;
  flex-direction: column;
  flex: 1;
  min-width: 0;
}

.formula-bar {
  display: flex;
  align-items: center;
  height: 27px;
  flex: none;
  padding: 0 6px 0 1px;
}

.name-box {
  width: 155px;
  margin-right: 1px;
}

.name-box input {
  flex: 1;
  min-width: 0;
  padding-left: 5px;
}

.name-box button {
  width: 21px;
  border-left: 1px solid #aba7a4;
  background: linear-gradient(#fdfdfd, #efedec);
}

.fx {
  width: 25px;
  color: #4a4a4a;
  font-size: 18px;
  line-height: 22px;
  font-weight: bold;
}

.fx small {
  font-size: 14px;
}

.formula-input {
  flex: 1;
  min-width: 0;
  height: 24px;
  margin: 0 4px 0 1px;
  padding: 0 5px;
  border: 1px solid #aba7a4;
  border-radius: 4px;
  background-color: #fff;
  font-size: 14px;
}

.expand {
  width: 18px;
  height: 24px;
  border: 1px solid #aba7a4;
  border-radius: 4px;
  background: linear-gradient(#fefefe, #ececea);
}

.expand::before {
  content: '';
  display: block;
  width: 0;
  margin: 0 auto;
  border: 6px solid transparent;
  border-top-color: #3c3c3c;
  border-bottom-width: 0;
}

/* Sheet */
.sheet-area {
  display: flex;
  flex: 1;
  min-height: 0;
}

.sheet {
  position: relative;
  flex: 1;
  min-width: 0;
  overflow: hidden;
  background-color: #fff;
  border-top: 1px solid #aba7a4;
}

table {
  width: 100%;
  table-layout: fixed;
  border-spacing: 0;
  color: #000;
  font-family: 'Liberation Sans', sans-serif;
  font-size: 16px;
  line-height: 17px;
}

.w-head { width: 41px; }
.w-a { width: 90px; }
.w-b { width: 42px; }
.w-c { width: 32px; }
.w-wide { width: 165px; }
.w-f { width: 130px; }
.w-meal { width: 30px; }
.w-std { width: 99px; }
.w-o { width: 85px; }

th {
  padding: 0;
  border-right: 1px solid #aba7a4;
  border-bottom: 1px solid #aba7a4;
  color: #4c4c4c;
  font-family: 'Noto Sans', sans-serif;
  font-size: 14px;
  line-height: 18px;
  font-weight: normal;
}

thead th {
  height: 20px;
  background: linear-gradient(#f7f7f6 50%, #f1f0ee 50%);
}

tbody th {
  background: linear-gradient(90deg, #f7f7f6 50%, #f1f0ee 50%);
}

th.active {
  color: #fff;
  font-weight: bold;
  border-color: #d9643a;
}

thead .active {
  background: linear-gradient(#f7a98b 50%, #f07746 50%);
}

tbody .active {
  background: linear-gradient(90deg, #f7a98b 50%, #f07746 50%);
}

tbody tr {
  height: 20px;
}

tbody tr.tall {
  height: 22px;
}

td {
  position: relative;
  padding: 0 2px 1px 1px;
  text-align: right;
  vertical-align: bottom;
}

.freeze {
  border-right: 1px solid #000;
}

tbody .row-1 {
  height: 35px;
}

tbody .row-2 {
  height: 99px;
}

tbody .row-3 {
  height: 57px;
}

tbody .row-4 {
  height: 63px;
}

.row-1 td {
  vertical-align: middle;
  text-align: center;
  font-weight: bold;
  text-decoration: underline;
}

.row-1 .title {
  font-size: 18px;
}

.row-2 td {
  padding-top: 1px;
  vertical-align: top;
  text-align: center;
  font-weight: bold;
  white-space: nowrap;
}

.row-3 td {
  padding-top: 1px;
  vertical-align: top;
  text-align: left;
}

.row-4 td,
.row-4 th {
  border-bottom: 1px solid #000;
}

.cyan {
  background-color: #66ffff;
}

.blue {
  background-color: #5983b0;
}

/* Comment marker in the cell corner */
.noted::after {
  content: '';
  position: absolute;
  top: 0;
  right: 1px;
  width: 7px;
  height: 7px;
  border: 1px solid #fff;
  background-color: #f00;
}

/* Text runs past the cell edge */
.clipped::after {
  content: '';
  position: absolute;
  right: 1px;
  top: 24px;
  border: 4px solid transparent;
  border-left-color: #000;
  border-right-width: 0;
}

.vertical {
  display: block;
  margin: 0 0 0 auto;
  writing-mode: vertical-rl;
  transform: rotate(180deg);
  white-space: nowrap;
  text-align: left;
  width: 17px;
}

.row-4 .cyan {
  padding-left: 0;
  padding-bottom: 0;
}

.selected::before {
  content: '';
  position: absolute;
  inset: 0 0 0 -1px;
  border: 2px solid #000;
}

.selected::after {
  content: '';
  position: absolute;
  right: -2px;
  bottom: -2px;
  width: 5px;
  height: 5px;
  background-color: #000;
}

.pointer {
  position: absolute;
  left: 870px;
  top: 264px;
  width: 14px;
  height: 22px;
}

/* Scroll bars */
.scroll {
  display: flex;
  flex: none;
}

.scroll button {
  position: relative;
  width: 13px;
  height: 13px;
  border: 1px solid #b5b2af;
  border-radius: 7px;
  background-color: #f5f4f3;
  flex: none;
}

.scroll button::before {
  content: '';
  position: absolute;
  inset: 0;
  margin: auto;
  width: 0;
  height: 0;
  border: 3px solid transparent;
}

.scroll .up::before {
  border-top-width: 0;
  border-bottom-color: #a5a29f;
}

.scroll .down::before {
  border-bottom-width: 0;
  border-top-color: #4c4c4c;
}

.scroll .left::before {
  border-left-width: 0;
  border-right-color: #a5a29f;
}

.scroll .right::before {
  border-right-width: 0;
  border-left-color: #4c4c4c;
}

.vertical-scroll {
  flex-direction: column;
  width: 13px;
  border-top: 1px solid #aba7a4;
  border-left: 1px solid #b5b2af;
  background: linear-gradient(90deg, #d6d3d1, #e2e0de);
}

.vertical-scroll button {
  width: 12px;
}

.horizontal-scroll {
  height: 13px;
  margin-right: 13px;
  border-top: 1px solid #aba7a4;
  background: linear-gradient(#d6d3d1, #e2e0de);
}

.horizontal-scroll button,
.horizontal-scroll .thumb {
  height: 12px;
}

.track {
  flex: 1;
}

.thumb {
  border: 1px solid #a5a19e;
  border-radius: 7px;
}

.vertical-scroll .thumb {
  height: 30px;
  background: repeating-linear-gradient(#a5a29f 0 1px, transparent 1px 3px) center / 5px 7px no-repeat,
    linear-gradient(90deg, #fff, #e9e8e6);
}

.horizontal-scroll .thumb {
  width: 130px;
  margin-left: -2px;
  background: repeating-linear-gradient(90deg, #a5a29f 0 1px, transparent 1px 3px) center / 7px 4px no-repeat,
    linear-gradient(#fff, #e9e8e6);
}

/* Sheet tabs */
.tab-bar {
  display: flex;
  height: 20px;
  flex: none;
  padding-left: 6px;
  border-bottom: 1px solid #aba7a4;
}

.nav {
  display: flex;
  align-items: center;
  justify-content: center;
  width: 20px;
}

.nav svg {
  width: 10px;
  height: 12px;
}

.add {
  display: flex;
  align-items: center;
  justify-content: center;
  width: 32px;
}

.add svg {
  width: 12px;
  height: 12px;
}

.tabs {
  display: flex;
  border-left: 1px solid #aba7a4;
}

.tabs button {
  padding: 0 12px;
  border-top: 1px solid #aba7a4;
  border-right: 1px solid #aba7a4;
  background-color: #dcd8d5;
  line-height: 17px;
  white-space: nowrap;
}

.tabs .current {
  padding: 0 11px;
  background-color: #fff;
  font-weight: bold;
}

/* Splitter and sidebar */
.splitter {
  display: flex;
  align-items: center;
  width: 7px;
  flex: none;
  border: 1px solid #aba7a4;
}

.splitter button {
  display: flex;
  align-items: center;
  width: 5px;
  height: 72px;
  background-color: #aaa7a4;
}

.splitter button::before {
  content: '';
  border: 4px solid transparent;
  border-left-color: #fff;
  border-right-width: 0;
}

.sidebar {
  display: flex;
  flex-direction: column;
  align-items: center;
  width: 40px;
  flex: none;
  padding-top: 3px;
  border-top: 1px solid #aba7a4;
  border-bottom: 1px solid #aba7a4;
}

.sidebar button {
  display: flex;
  align-items: center;
  justify-content: center;
  width: 32px;
  height: 32px;
  margin-bottom: 3px;
  border: 1px solid transparent;
  border-radius: 4px;
}

.sidebar .pressed {
  border-color: #b5b2af;
  background-color: #f5f4f3;
}

.sidebar hr {
  width: 23px;
  margin: 0 0 3px;
  border: none;
  border-top: 1px solid #d8d5d2;
}

.sidebar .functions {
  align-items: baseline;
  color: #4a4a4a;
  font-size: 20px;
  font-weight: 500;
  line-height: 30px;
}

.functions small {
  font-size: 11px;
  font-weight: bold;
}

/* Status bar */
.status-bar {
  display: grid;
  grid-template-columns: 182px 149px 139px 216px 68px 29px 29px 29px 1fr 143px 50px;
  align-items: center;
  height: 21px;
  flex: none;
}

.status-bar > span {
  display: flex;
  align-items: center;
  height: 16px;
  padding-left: 9px;
  border-right: 1px solid #c9c6c3;
  white-space: nowrap;
}

.status-bar > span:last-child {
  border-right: none;
}

.status-bar .center {
  justify-content: center;
  padding-left: 0;
}

.status-bar svg {
  width: 14px;
  height: 12px;
}

.zoom button {
  width: 12px;
  color: #777;
  font-size: 16px;
  line-height: 16px;
}

.zoom input {
  appearance: none;
  flex: 1;
  min-width: 0;
  height: 12px;
  margin: 0 2px;
  background: linear-gradient(#aba7a4, #aba7a4) center / 100% 2px no-repeat;
}

.zoom input::-webkit-slider-thumb {
  appearance: none;
  width: 10px;
  height: 10px;
  border: 1px solid #8c8986;
  border-radius: 5px;
  background-color: #f5f4f3;
}

.status-bar .zoom {
  padding: 0 6px 0 8px;
}
```
